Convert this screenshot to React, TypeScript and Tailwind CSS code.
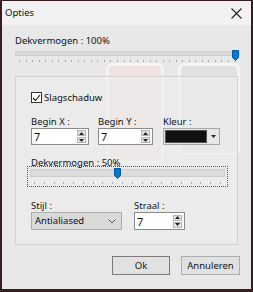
import React from 'react';

const font = { fontFamily: '"Noto Sans", "Open Sans", sans-serif' };

const Thumb: React.FC = () => (
  <svg width="7" height="11" viewBox="0 0 7 11" className="block">
    <path d="M0.5 0.5 H6.5 V7.5 L3.5 10.5 L0.5 7.5 Z" fill="#0078d7" stroke="#005a9e" strokeWidth="1" />
  </svg>
);

const Ticks: React.FC<{ count: number }> = ({ count }) => (
  <div className="flex justify-between">
    {Array.from({ length: count }).map((_, i) => (
      <div key={i} className="w-px h-[2px] bg-[#a9a9a9]" />
    ))}
  </div>
);

const Spinner: React.FC = () => (
  <div className="flex flex-col gap-px mr-[2px]">
    <div className="w-[9px] h-[6px] bg-[#e4e4e4] border border-[#b5b5b5] flex items-center justify-center">
      <svg width="5" height="3" viewBox="0 0 5 3"><path d="M0 3 L2.5 0 L5 3 Z" fill="#222" /></svg>
    </div>
    <div className="w-[9px] h-[6px] bg-[#e4e4e4] border border-[#b5b5b5] flex items-center justify-center">
      <svg width="5" height="3" viewBox="0 0 5 3"><path d="M0 0 L2.5 3 L5 0 Z" fill="#222" /></svg>
    </div>
  </div>
);

const SpinInput: React.FC<{ value: string; width: string }> = ({ value, width }) => (
  <div className={`${width} h-[17px] bg-white border border-[#8a8a8a] flex items-center justify-between`}>
    <span className="pl-[2px] text-[11px] leading-none text-[#111]">{value}</span>
    <Spinner />
  </div>
);

const App: React.FC = () => {
  return (
    <div className="w-[253px] h-[292px] bg-[#3a1c20] overflow-hidden pt-px pl-[2px]" style={font}>
      <div className="relative w-[249px] h-[288px] bg-[#e8e8e8] flex flex-col">
        {/* faint backdrop showing through the translucent window */}
        <div className="absolute left-[104px] top-[62px] w-[58px] h-[100px] rounded-[6px] border-[3px] border-[#f4f4f4] bg-[#efe2e2]" />
        <div className="absolute left-[176px] top-[62px] w-[62px] h-[92px] rounded-[6px] border-[3px] border-[#f4f4f4] bg-[#e2e2e2]" />

        {/* title bar */}
        <div className="relative h-[24px] bg-[#f2f2f2] flex items-center justify-between pl-[3px] pr-[9px]">
          <span className="text-[9.5px] text-[#111]">Opties</span>
          <svg width="11" height="11" viewBox="0 0 11 11">
            <path d="M0.5 0.5 L10.5 10.5 M10.5 0.5 L0.5 10.5" stroke="#222" strokeWidth="1.1" />
          </svg>
        </div>

        <div className="relative flex flex-col px-[13px] pt-[10px]">
          <span className="text-[9.5px] leading-[12px] text-[#111]">Dekvermogen : 100%</span>

          {/* top slider */}
          <div className="relative w-[225px] mt-[2px] h-[14px]">
            <div className="mt-[2px] h-[5px] bg-[#dadada] border border-[#cfcfcf]" />
            <div className="mt-[4px] px-[4px]">
              <Ticks count={34} />
            </div>
            <div className="absolute right-[1px] top-[1px]">
              <Thumb />
            </div>
          </div>

          {/* group box */}
          <div className="mt-[13px] border border-[#d2d2d2] bg-[#ededed]/70 pl-[15px] pt-[15px] pb-[14px] flex flex-col">
            <div className="flex items-center gap-[2px] h-[11px]">
              <div className="w-[11px] h-[11px] bg-white border border-[#333] flex items-center justify-center">
                <svg width="9" height="8" viewBox="0 0 9 8">
                  <path d="M1 4 L3.5 6.5 L8 1" stroke="#111" strokeWidth="1.1" fill="none" />
                </svg>
              </div>
              <span className="text-[9.5px] leading-none text-[#111]">Slagschaduw</span>
            </div>

            <div className="flex mt-[12px]">
              <div className="flex flex-col w-[67px]">
                <span className="text-[9.5px] leading-[13px] text-[#111]">Begin X :</span>
                <SpinInput value="7" width="w-[58px]" />
              </div>
              <div className="flex flex-col w-[65px]">
                <span className="text-[9.5px] leading-[13px] text-[#111]">Begin Y :</span>
                <SpinInput value="7" width="w-[55px]" />
              </div>
              <div className="flex flex-col">
                <span className="text-[9.5px] leading-[13px] text-[#111]">Kleur :</span>
                <div className="w-[57px] h-[17px] bg-[#e4e4e4] border border-[#a8a8a8] flex items-center p-[1px] gap-px">
                  <div className="flex-1 h-full bg-[#111] border border-[#555]" />
                  <div className="w-[10px] h-full flex items-center justify-center bg-[#e8e8e8]">
                    <svg width="5" height="3" viewBox="0 0 5 3"><path d="M0 0 L2.5 3 L5 0 Z" fill="#222" /></svg>
                  </div>
                </div>
              </div>
            </div>

            <span className="mt-[12px] text-[9.5px] leading-[11px] text-[#111]">Dekvermogen : 50%</span>
            <div className="relative -ml-[4px] mt-[-2px] w-[201px] h-[21px] border border-dotted border-[#555] px-[2px] pt-[2px]">
              <div className="h-[8px] bg-[#dcdcdc] border border-[#cdcdcd]" />
              <div className="mt-[5px] px-[4px]">
                <Ticks count={20} />
              </div>
              <div className="absolute left-[86px] top-px">
                <Thumb />
              </div>
            </div>

            <div className="flex mt-[12px]">
              <div className="flex flex-col w-[103px]">
                <span className="text-[9.5px] leading-[13px] text-[#111]">Stijl :</span>
                <div className="w-[91px] h-[18px] bg-[#d9d9d9] border border-[#adadad] flex items-center justify-between pl-[3px] pr-[5px]">
                  <span className="text-[9.5px] leading-none text-[#111]">Antialiased</span>
                  <svg width="8" height="5" viewBox="0 0 8 5">
                    <path d="M0.5 0.5 L4 4 L7.5 0.5" stroke="#555" strokeWidth="1" fill="none" />
                  </svg>
                </div>
              </div>
              <div className="flex flex-col">
                <span className="text-[9.5px] leading-[13px] text-[#111]">Straal :</span>
                <div className="w-[51px] h-[18px] bg-white border border-[#8a8a8a] flex items-center justify-between">
                  <span className="pl-[2px] text-[11px] leading-none text-[#111]">7</span>
                  <Spinner />
                </div>
              </div>
            </div>
          </div>
        </div>

        {/* buttons */}
        <div className="relative flex justify-end gap-[11px] pr-[11px] mt-[11px]">
          <button className="w-[58px] h-[19px] bg-[#e1e1e1] border border-[#7a7a7a] text-[9.5px] leading-none text-[#111]">Ok</button>
          <button className="w-[59px] h-[19px] bg-[#e1e1e1] border border-[#adadad] text-[9.5px] leading-none text-[#111]">Annuleren</button>
        </div>
      </div>
    </div>
  );
};

export default App;
